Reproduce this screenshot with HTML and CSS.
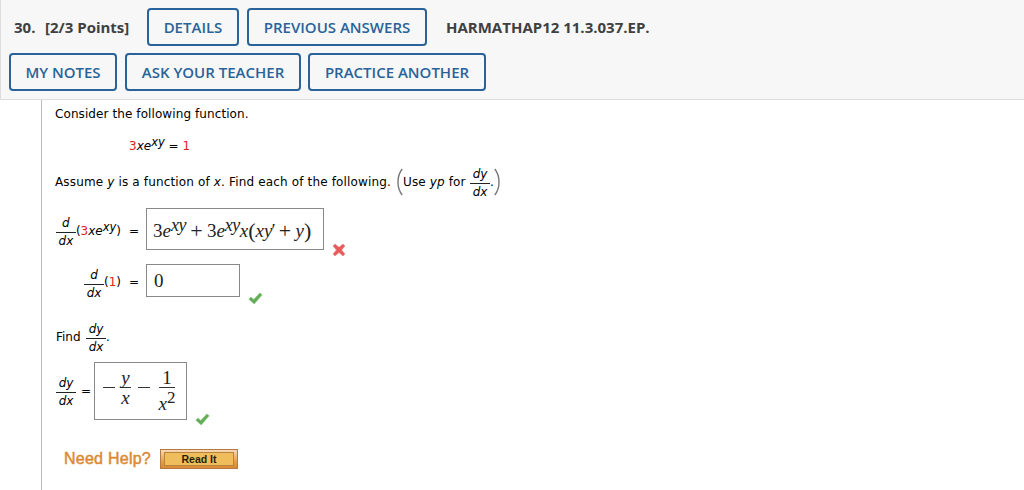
FILE: index.html
```html
<!DOCTYPE html>
<html lang="en">
<head>
    <meta charset="UTF-8">
    <meta name="viewport" content="width=device-width, initial-scale=1.0">
    <title>HARMATHAP12 11.3.037.EP.</title>
    <link rel="stylesheet" href="styles.css">
</head>
<body>

    <div class="header">
        <div class="header-row">
            <span class="number">30.</span>
            <span class="points">[2/3 Points]</span>
            <button type="button" class="btn details">DETAILS</button>
            <button type="button" class="btn previous">PREVIOUS ANSWERS</button>
            <span class="code">HARMATHAP12 11.3.037.EP.</span>
        </div>
        <div class="header-row">
            <button type="button" class="btn notes">MY NOTES</button>
            <button type="button" class="btn ask">ASK YOUR TEACHER</button>
            <button type="button" class="btn practice">PRACTICE ANOTHER</button>
        </div>
    </div>

    <div class="question">
        <div class="row intro">Consider the following function.</div>
        <div class="row equation"><span><span class="red">3</span><i>xe</i><sup>xy</sup> = <span class="red">1</span></span></div>

        <div class="row assume">
            <span class="assume-text">Assume <i>y</i> is a function of <i>x</i>. Find each of the following.</span>
            <svg class="paren" width="6" height="28" viewBox="0 0 6 28"><path d="M5.2 1C-.4 8-.4 20 5.2 27"/></svg>
            <span class="use-text">Use <i>yp</i> for</span>
            <span class="frac"><i>dy</i><i>dx</i></span><span>.</span>
            <svg class="paren" width="6" height="28" viewBox="0 0 6 28"><path d="M.8 1C6.4 8 6.4 20 .8 27"/></svg>
        </div>

        <!-- Derivative of the left side -->
        <div class="row left-side">
            <div class="prompt">
                <span class="frac"><i>d</i><i>dx</i></span>
                <span class="operand">(<span class="red">3</span><i>xe</i><sup>xy</sup>)</span>
                <span class="equals">=</span>
            </div>
            <div class="answer answer-left">
                <span>3<i>e</i></span><i class="power">xy</i>
                <span class="plus">+</span>
                <span>3<i>e</i></span><i class="power">xy</i><i>x</i>
                <span class="big-paren">(</span><i>xy</i><span class="prime">′</span>
                <span class="plus">+</span><i>y</i><span class="big-paren">)</span>
            </div>
            <svg class="mark" width="14" height="14" viewBox="0 0 14 14">
                <path class="wrong" d="M1 3 3 1l4 3.2L11 1l2 2-3.4 4L13 11l-2 2-4-3.4L3 13l-2-2 3.4-4z"/>
            </svg>
        </div>

        <!-- Derivative of the right side -->
        <div class="row right-side">
            <div class="prompt">
                <span class="frac"><i>d</i><i>dx</i></span>
                <span class="operand">(<span class="red">1</span>)</span>
                <span class="equals">=</span>
            </div>
            <div class="answer answer-right">0</div>
            <svg class="mark" width="15" height="13" viewBox="0 0 15 13">
                <path class="correct" d="M.8 7.2 3 5l2.8 2.4L11.8 1l2.4 1.8-8 9.2z"/>
            </svg>
        </div>

        <div class="row find">
            <span class="find-text">Find</span>
            <span class="frac"><i>dy</i><i>dx</i></span><span>.</span>
        </div>

        <div class="row result">
            <span class="frac"><i>dy</i><i>dx</i></span>
            <span class="result-equals">=</span>
            <div class="answer answer-result">
                <span class="minus"></span>
                <span class="serif-frac first"><i>y</i><i>x</i></span>
                <span class="minus"></span>
                <span class="serif-frac second"><span>1</span><span class="squared"><i>x</i><span class="two">2</span></span></span>
            </div>
            <svg class="mark" width="15" height="13" viewBox="0 0 15 13">
                <path class="correct" d="M.8 7.2 3 5l2.8 2.4L11.8 1l2.4 1.8-8 9.2z"/>
            </svg>
        </div>

        <div class="row help">
            <span class="help-text">Need Help?</span>
            <button type="button" class="read-it"><span>Read It</span></button>
        </div>
    </div>

</body>
</html>
```

FILE: styles.css
```css
* {
    box-sizing: border-box;
}
body {
    margin: 0;
    height: 490px;
    overflow: hidden;
    background-color: #fff;
    color: #000;
    font-family: Verdana, "DejaVu Sans", sans-serif;
    font-size: 12px;
}
.header {
    height: 100px;
    padding: 8px 0 0 8px;
    background-color: #f7f7f7;
    border-left: 1px solid #ddd;
    border-bottom: 1px solid #ddd;
    font-family: "Open Sans", sans-serif;
    font-size: 15px;
    font-weight: 700;
    color: #404040;
}
.header-row {
    display: flex;
    align-items: center;
    height: 38px;
    margin-bottom: 7px;
    white-space: nowrap;
}
.number {
    width: 30px;
    padding-left: 5px;
    margin-right: 6px;
}
.points {
    width: 102px;
}
.code {
    margin-left: 11px;
}
.btn {
    height: 38px;
    margin-right: 8px;
    padding: 0 0 1px;
    border: 2px solid #296399;
    border-radius: 4px;
    background-color: transparent;
    color: #296399;
    font-family: inherit;
    font-size: 15px;
    font-weight: 600;
    text-align: center;
}
.details {
    width: 92px;
}
.previous {
    width: 180px;
}
.notes {
    width: 108px;
}
.ask {
    width: 176px;
    margin-right: 7px;
}
.practice {
    width: 178px;
}

.question {
    height: 390px;
    margin-left: 41px;
    padding-left: 13px;
    border-left: 1px solid #bbb;
}
.row {
    display: flex;
    align-items: center;
    line-height: 16px;
    white-space: pre;
}
.red {
    color: #e0221c;
}
sup {
    font-size: 11.5px;
    font-style: italic;
    line-height: 0;
    vertical-align: 4px;
}
.intro {
    height: 28px;
    letter-spacing: .09px;
}
.equation {
    height: 34px;
    padding: 1px 0 0 74px;
}
.frac {
    display: flex;
    flex-direction: column;
    align-items: center;
    width: 20px;
    line-height: 17px;
    padding-top: 3px;
}
.frac i:first-child {
    width: 100%;
    height: 18px;
    border-bottom: 1px solid #222;
    text-align: center;
}
.assume {
    height: 42px;
    padding-bottom: 2px;
}
.assume-text {
    width: 342px;
    letter-spacing: .15px;
}
.use-text {
    width: 67px;
    letter-spacing: .14px;
}
.paren {
    fill: none;
    stroke: #777;
    stroke-width: 1.4;
}

/* Answer rows */
.left-side {
    height: 50px;
}
.right-side {
    height: 53px;
}
.prompt {
    display: flex;
    align-items: center;
    justify-content: flex-end;
    width: 91px;
    padding-top: 3px;
}
.prompt .frac {
    padding-top: 4px;
}
.equals {
    width: 17px;
    margin-left: 8px;
}
.answer {
    display: flex;
    align-items: center;
    border: 1px solid #888;
    font-family: "Liberation Serif", serif;
    font-size: 19px;
    color: #222;
}
.answer-left {
    width: 178px;
    height: 42px;
    padding: 4px 0 0 6px;
}
.power {
    padding-bottom: 13px;
    font-size: 18px;
    letter-spacing: -.5px;
}
.plus {
    width: 13px;
    margin: 0 4px;
    font-size: 22px;
    text-align: center;
}
.big-paren {
    font-size: 22px;
}
.prime {
    width: 3px;
    margin-left: -1px;
}
.answer-right {
    width: 94px;
    height: 33px;
    padding-left: 7px;
}
.mark {
    align-self: flex-end;
    margin-left: 8px;
}
.left-side .mark {
    margin-bottom: -3px;
}
.right-side .mark {
    margin-bottom: 2px;
}
.result .mark {
    margin-bottom: -6px;
}
.wrong {
    fill: #e85a5a;
    stroke: #f08080;
    stroke-width: .6;
}
.correct {
    fill: #62ad55;
    stroke: #8cc880;
    stroke-width: .6;
}
.find {
    height: 55px;
    padding-top: 4px;
}
.find-text {
    width: 31px;
    padding-left: 1px;
}
.result {
    height: 58px;
    padding-left: 1px;
}
.result-equals {
    width: 13px;
    margin-left: 5px;
}
.answer-result {
    width: 93px;
    height: 58px;
    padding: 0 0 7px 8px;
}
.minus {
    width: 12px;
    height: 1px;
    background-color: #333;
}
.serif-frac {
    display: flex;
    flex-direction: column;
    align-items: center;
    line-height: 19px;
}
.serif-frac > :first-child {
    width: 100%;
    height: 20px;
    border-bottom: 1px solid #333;
    text-align: center;
}
.first {
    width: 11px;
    margin: 0 7px 0 5px;
}
.second {
    width: 16px;
    margin-left: 9px;
}
.squared {
    display: flex;
    height: 19px;
}
.squared i {
    padding-top: 6px;
}
.two {
    font-size: 17px;
}

.help {
    height: 34px;
    margin-top: 22px;
    padding-left: 9px;
    font-family: "Liberation Sans", Arial, sans-serif;
}
.help-text {
    width: 96px;
    font-size: 16px;
    letter-spacing: .25px;
    color: #dc8a35;
    -webkit-text-stroke: .5px #dc8a35;
}
.read-it {
    width: 78px;
    height: 20px;
    padding: 2px 3px;
    border: 1px solid #b37a42;
    background: linear-gradient(#f8d7b4, #e39a42 70%, #d98834);
    font-family: inherit;
    font-size: 10.5px;
    font-weight: 700;
    color: #2b1c08;
}
.read-it span {
    display: block;
    height: 14px;
    border: 1px solid #b9853d;
    background-color: #f0bd5c;
    line-height: 13px;
}
```
